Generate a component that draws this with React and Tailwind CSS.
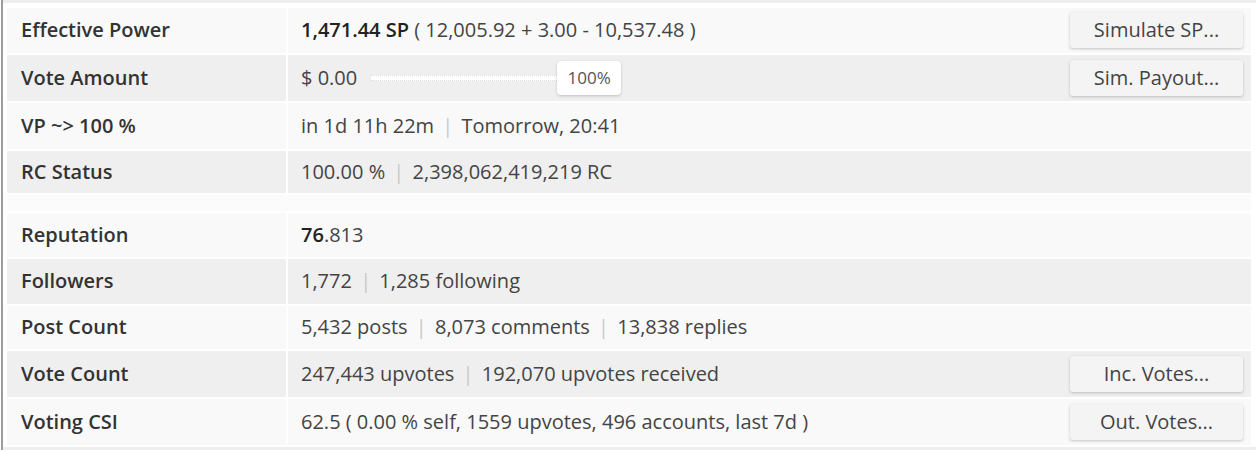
import React from 'react';

const Sep = () => <span className="mx-[3px] text-[#c8c8c8]">|</span>;

const SideButton = ({ children }) => (
  <button className="w-[173px] h-[36px] rounded-[3px] bg-[#f4f4f4] text-[20px] text-[#444] shadow-[0_1px_3px_rgba(0,0,0,0.22)]">
    {children}
  </button>
);

const VoteSlider = () => (
  <div className="flex items-center ml-[14px]">
    <div className="w-[186px] h-[6px] border-y border-dotted border-[#dcdcdc] bg-white" />
    <div className="w-[64px] h-[34px] flex items-center justify-center rounded-[4px] bg-white text-[17px] text-[#555] shadow-[0_1px_3px_rgba(0,0,0,0.2)]">
      100%
    </div>
  </div>
);

const rows = [
  {
    label: 'Effective Power',
    h: 'h-[45px]',
    value: (
      <>
        <span className="font-semibold text-[#222]">1,471.44 SP</span> ( 12,005.92 + 3.00 - 10,537.48 )
      </>
    ),
    button: 'Simulate SP...',
  },
  {
    label: 'Vote Amount',
    h: 'h-[46px]',
    value: (
      <div className="flex items-center">
        <span>$ 0.00</span>
        <VoteSlider />
      </div>
    ),
    button: 'Sim. Payout...',
  },
  {
    label: 'VP ~> 100 %',
    h: 'h-[46px]',
    value: (
      <>
        in 1d 11h 22m <Sep /> Tomorrow, 20:41
      </>
    ),
  },
  {
    label: 'RC Status',
    h: 'h-[42px]',
    value: (
      <>
        100.00 % <Sep /> 2,398,062,419,219 RC
      </>
    ),
  },
  { spacer: true },
  {
    label: 'Reputation',
    h: 'h-[44px]',
    value: (
      <>
        <span className="font-semibold text-[#222]">76</span>.813
      </>
    ),
  },
  {
    label: 'Followers',
    h: 'h-[45px]',
    value: (
      <>
        1,772 <Sep /> 1,285 following
      </>
    ),
  },
  {
    label: 'Post Count',
    h: 'h-[43px]',
    value: (
      <>
        5,432 posts <Sep /> 8,073 comments <Sep /> 13,838 replies
      </>
    ),
  },
  {
    label: 'Vote Count',
    h: 'h-[46px]',
    value: (
      <>
        247,443 upvotes <Sep /> 192,070 upvotes received
      </>
    ),
    button: 'Inc. Votes...',
  },
  {
    label: 'Voting CSI',
    h: 'h-[46px]',
    value: <>62.5 ( 0.00 % self, 1559 upvotes, 496 accounts, last 7d )</>,
    button: 'Out. Votes...',
  },
];

export default function App() {
  let stripe = 0;

  return (
    <div className="w-[1256px] h-[450px] bg-white pl-px font-['Open_Sans',sans-serif]">
      <div className="h-full border-l-2 border-[#9c9c9c] flex flex-col">
        <div className="h-[3px] bg-[#eeeeee]" />
        <div className="px-[2px] pt-[3px]">
          <table className="w-[1248px] border-separate border-spacing-[2px]">
            <tbody>
              {rows.map((row, i) => {
                if (row.spacer) {
                  return (
                    <tr key={i}>
                      <td colSpan={2} className="h-[16px] bg-[#fbfbfb]" />
                    </tr>
                  );
                }
                const bg = stripe++ % 2 === 0 ? 'bg-[#f9f9f9]' : 'bg-[#efefef]';
                return (
                  <tr key={i} className={row.h}>
                    <td className={`${bg} w-[279px] pl-[14px] text-[20px] leading-none font-semibold text-[#333] align-middle`}>
                      {row.label}
                    </td>
                    <td className={`${bg} pl-[13px] pr-[8px] text-[20px] leading-none text-[#444] align-middle`}>
                      <div className="flex items-center justify-between">
                        <div className="whitespace-nowrap">{row.value}</div>
                        {row.button && <SideButton>{row.button}</SideButton>}
                      </div>
                    </td>
                  </tr>
                );
              })}
            </tbody>
          </table>
        </div>
        <div className="mt-auto h-[4px] bg-[#eeeeee]" />
      </div>
    </div>
  );
}
